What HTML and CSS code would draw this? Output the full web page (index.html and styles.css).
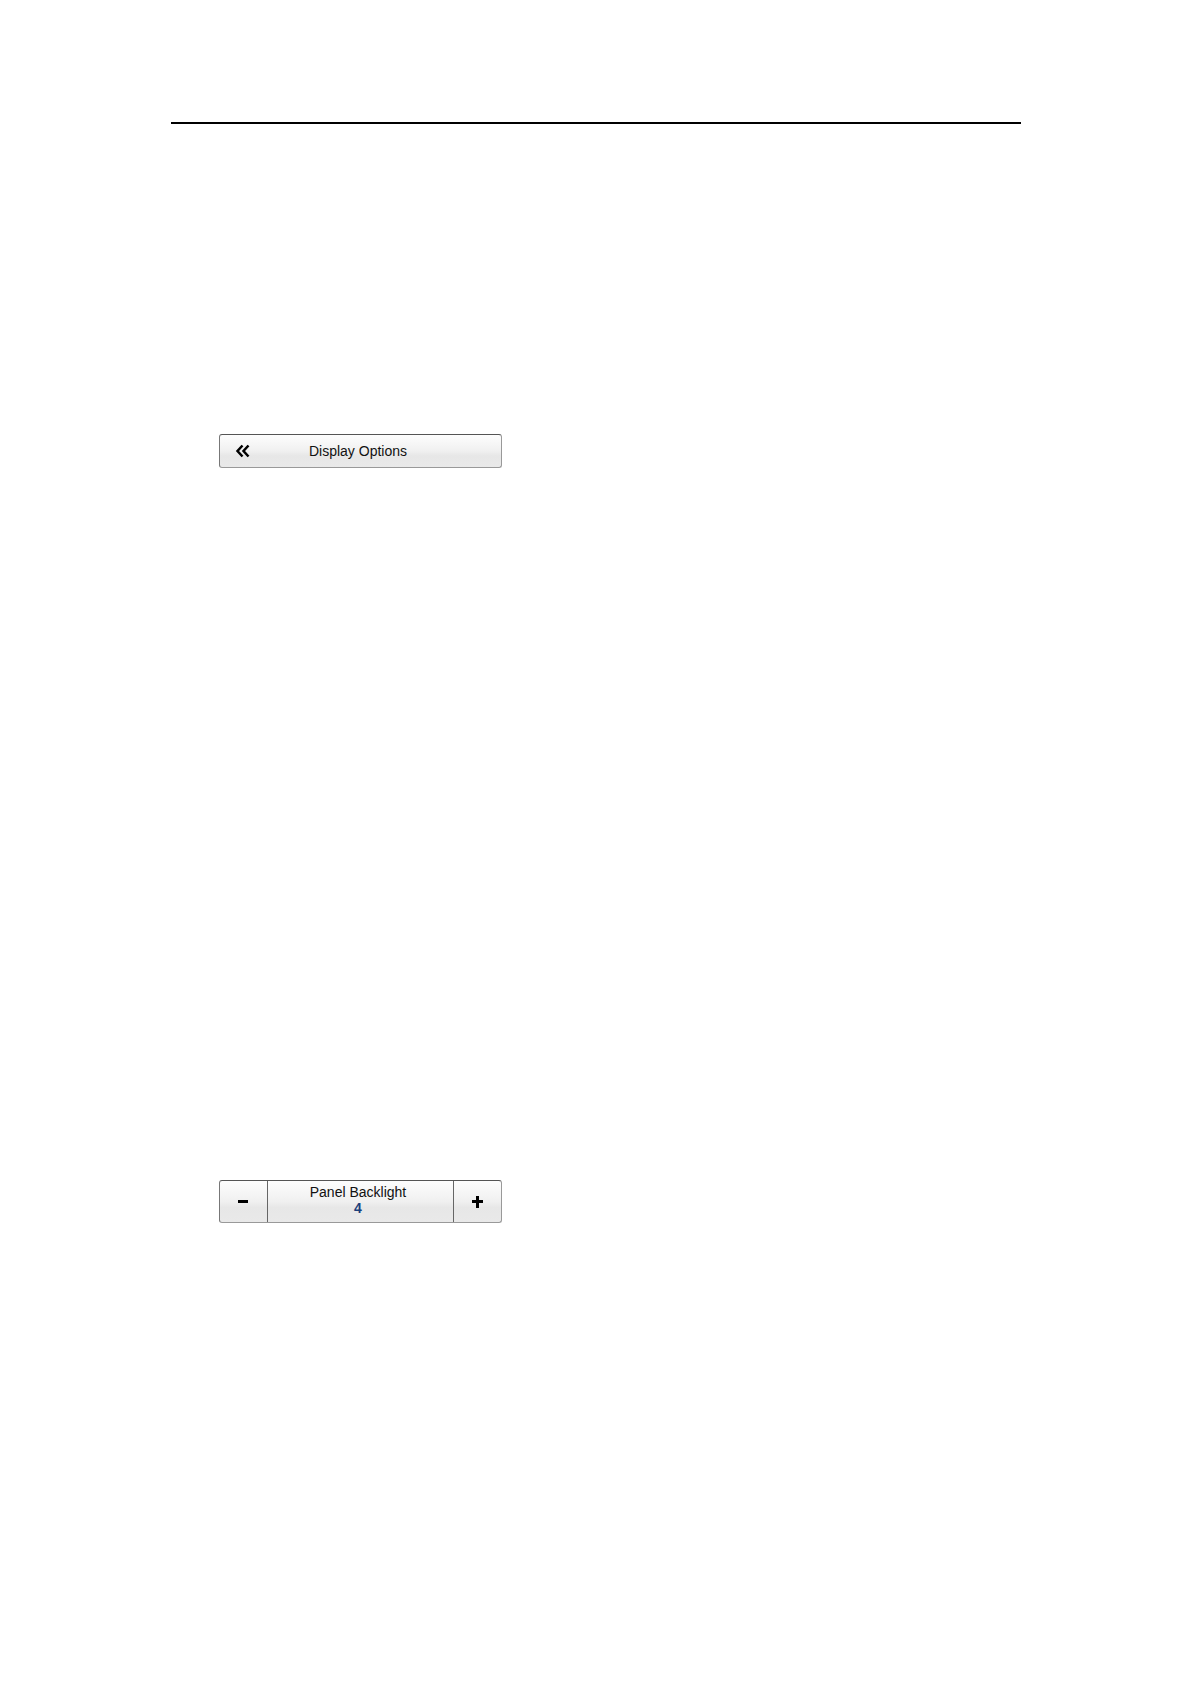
FILE: index.html
```html
<!DOCTYPE html>
<html lang="en">
<head>
  <meta charset="UTF-8">
  <title>Display Options</title>
  <link rel="stylesheet" href="styles.css">
</head>
<body>

  <main class="page">
    <hr class="rule">

    <div class="controls">
      <button type="button" class="box menu-button">
        <svg class="icon" viewBox="0 0 16 16" aria-hidden="true">
          <path d="M7.500 2.500 L2.500 8 L7.500 13.500 M13.500 2.500 L8.500 8 L13.500 13.500"/>
        </svg>
        <span class="menu-label">Display Options</span>
      </button>

      <div class="box stepper" role="group" aria-labelledby="backlight-label">
        <button type="button" id="minus" class="step" aria-label="Decrease">
          <svg class="icon" viewBox="0 0 16 16" aria-hidden="true">
            <path d="M3 7.500 H13"/>
          </svg>
        </button>
        <div class="reading">
          <span id="backlight-label">Panel Backlight</span>
          <output id="backlight" class="value">4</output>
        </div>
        <button type="button" id="plus" class="step" aria-label="Increase">
          <svg class="icon" viewBox="0 0 16 16" aria-hidden="true">
            <path d="M3 7.500 H14 M8.500 2 V14"/>
          </svg>
        </button>
      </div>
    </div>
  </main>

  <script>
    const backlight = document.getElementById("backlight");

    function changeBacklight(step) {
      const value = Number(backlight.textContent) + step;
      backlight.textContent = Math.max(0, value);
    }

    document.getElementById("minus").addEventListener("click", () => changeBacklight(-1));
    document.getElementById("plus").addEventListener("click", () => changeBacklight(1));
  </script>

</body>
</html>
```

FILE: styles.css
```css
* {
  box-sizing: border-box;
}
body {
  margin: 0;
  background: #fff;
  color: #111;
  font-family: "Liberation Sans", Arial, sans-serif;
  font-size: 14px;
  line-height: 16px;
}
button {
  padding: 0;
  border: 0;
  background: none;
  color: inherit;
  font: inherit;
  cursor: pointer;
}
.page {
  max-width: 850px;
  margin: 0 auto;
  padding: 122px 0;
}
.rule {
  height: 2px;
  margin: 0;
  border: 0;
  background: #000;
}
.controls {
  display: flex;
  flex-direction: column;
  gap: 712px;
  max-width: 331px;
  padding: 310px 0 0 48px;
}
.box {
  display: grid;
  grid-template-columns: 47px 1fr 47px;
  border: 1px solid #999;
  border-top-color: #555;
  border-left-color: #777;
  border-radius: 3px;
  background: linear-gradient(#fdfdfd, #f0f0f0 50%, #e7e7e7 65%, #e9e9e9);
}
.menu-button {
  align-items: center;
  height: 34px;
}
.menu-label {
  padding-right: 4px;
  text-align: center;
}
.icon {
  display: block;
  width: 16px;
  height: 16px;
  margin: 0 auto;
  fill: none;
  stroke: #000;
  stroke-width: 3;
}
.menu-button .icon {
  stroke-width: 2.5;
}
.stepper {
  height: 43px;
}
.reading {
  display: flex;
  flex-direction: column;
  align-items: center;
  padding: 3px 4px 0 0;
  border: solid #666;
  border-width: 0 1px;
}
.value {
  color: #1b3f7c;
  font-weight: bold;
}
```
